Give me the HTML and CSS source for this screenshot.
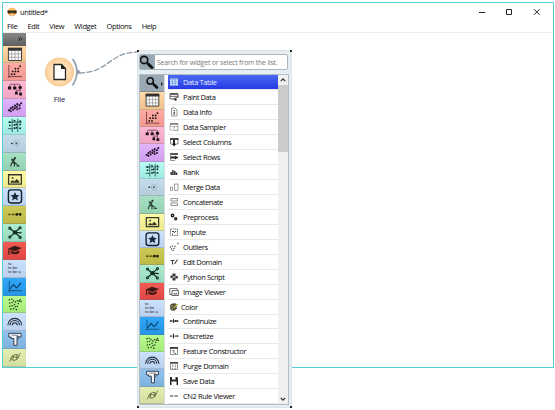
FILE: index.html
```html
<!DOCTYPE html>
<html lang="en">
<head>
<meta charset="utf-8">
<title>untitled*</title>
<link rel="stylesheet" href="styles.css">
</head>
<body>
<svg class="defs" xmlns="http://www.w3.org/2000/svg">
  <symbol id="c-search" viewBox="0 0 24 18"><circle cx="10" cy="6.500" r="3.500" fill="none" stroke="#111" stroke-width="1.600"/><path d="M12.500 9l1.500 1.300" stroke="#111"/><path d="M14 10.500l3.500 3.300" stroke="#111" stroke-width="2.900" stroke-linecap="round"/></symbol>
  <symbol id="c-table" viewBox="0 0 24 18"><path d="M5.500 2.500h14v13h-14z" fill="#fff" stroke="#333"/><path d="M5 2h15v3H5z" fill="#333"/><path d="M9 5v10M12.500 5v10M16 5v10M6 8.500h13M6 12h13" stroke="#777" stroke-width=".6"/></symbol>
  <symbol id="c-scatter" viewBox="0 0 24 18"><path d="M6 2v14M5 14.500h15" stroke="#753f3d" stroke-width="1"/><path d="M9 12h.01M12 12h.01M10 9h.01M13 9h.01M16 9h.01M13 6h.01M16 6h.01M18 3.500h.01" stroke="#1c1111" stroke-width="2" stroke-linecap="round"/></symbol>
  <symbol id="c-tree" viewBox="0 0 24 18"><path d="M7 7V4.500q0-1 1-1h9q1 0 1 1V7M12 3.500V7M14 13v-3h4v4M18 7v3" fill="none" stroke="#5e3a4a" stroke-width=".8"/><path d="M5 6h3.500v3H5zM10.500 6H14v3h-3.500zM12.500 11.500h3v3h-3zM17 12.500h3v3h-3z" fill="#24121c"/><circle cx="18" cy="7" r="1.900" fill="#24121c"/></symbol>
  <symbol id="c-dense" viewBox="0 0 24 18"><path d="M6 12h.01M8 10h.01M8 13h.01M10 8.500h.01M10.500 11.500h.01M12.500 7h.01M12.500 10h.01M14.500 8.500h.01M15 5.500h.01M15 11h.01M17.500 7h.01M17.500 10h.01M19 4.500h.01" stroke="#1f1027" stroke-width="2.200" stroke-linecap="round"/><path d="M6 12l13-7" stroke="#4b2c60" stroke-width=".7"/></symbol>
  <symbol id="c-grid" viewBox="0 0 24 18"><path d="M9.500 2v14M5 5.500h15M5 12.500h5M15.500 2v14" stroke="#265b58" stroke-width="1"/><path d="M7 9h.01M12 8.500h.01M14 8h.01M18 8h.01M12 12h.01M14 11.500h.01M18 12h.01M7 5.500h.01M12 4h.01M18 4.500h.01" stroke="#132f2d" stroke-width="2" stroke-linecap="round"/></symbol>
  <symbol id="c-spect" viewBox="0 0 24 18"><circle cx="9" cy="9" r="1" fill="#333"/><circle cx="14" cy="9" r="2.900" fill="none" stroke="#8597a5" stroke-dasharray="1 1"/><circle cx="14" cy="9" r="1" fill="#444"/><path d="M6.500 9h1M9 6.500v1M9 10.500v1" stroke="#f7fbff"/></symbol>
  <symbol id="c-dig" viewBox="0 0 24 18"><circle cx="12.500" cy="5.300" r="1.100" fill="#222"/><path d="M8.500 6.500l3.500.5-1.500 3 1.500 1.500v3M10 9.500l-1.500 2.500-.5 2.500M9 7.500l6 5" fill="none" stroke="#263a30" stroke-width="1.200"/><path d="M13.500 14.300h4.500l-2-2z" fill="#263a30"/></symbol>
  <symbol id="c-image" viewBox="0 0 24 18"><path d="M5.700 4h13.600v10H5.700z" fill="none" stroke="#38382c" stroke-width="1.400"/><path d="M8 12.500V11l2-1 2 1 2.500-2.500 2.500 2.500v1.500z" fill="#38382c"/><circle cx="10" cy="7.500" r="1.100" fill="#55553c"/></symbol>
  <symbol id="c-star" viewBox="0 0 24 18"><rect x="5.500" y="2" width="14" height="14" rx="2.800" fill="none" stroke="#101b29" stroke-width="1.500"/><path d="M12.500 4.300l1.400 3.100 3.500.3-2.600 2.300.8 3.400-3.100-1.900-3.100 1.900.8-3.400-2.600-2.300 3.500-.3z" fill="#1c2635"/></symbol>
  <symbol id="c-chain" viewBox="0 0 24 18"><path d="M6 9h13" stroke="#606015" stroke-width=".8"/><path d="M6.500 9h.01M10.500 9h.01" stroke="#555516" stroke-width="2.200" stroke-linecap="round"/><path d="M14.500 9h.01M18 9h.01" stroke="#22220c" stroke-width="3" stroke-linecap="round"/></symbol>
  <symbol id="c-net" viewBox="0 0 24 18"><path d="M7 4.500l11 9.500M18 4L7 14M12.500 9l7 .5" stroke="#132e22" stroke-width="1.400"/><circle cx="12.500" cy="9" r="2.300" fill="#132e22"/><g fill="#a4dfc3" stroke="#132e22" stroke-width="1.200"><circle cx="7" cy="4.500" r="1.100"/><circle cx="18" cy="4" r="1.100"/><circle cx="7" cy="14" r="1.100"/><circle cx="18" cy="14.300" r="1.100"/></g></symbol>
  <symbol id="c-cap" viewBox="0 0 24 18"><path d="M4.500 7.500L12 4l8 2.500-7.500 3.300z" fill="#3c1916"/><path d="M8 9l4.500 2 4.500-2.300v3q-4 2.800-9 .3z" fill="#3c1916"/><path d="M6 8v5.500" stroke="#3c1916" stroke-width="1.300"/></symbol>
  <symbol id="c-line" viewBox="0 0 24 18"><path d="M6.500 3v12M5 13.500h15" stroke="#134d76" stroke-width=".9"/><path d="M7 12l4-5 3 3.500 2-1.500 3-4" fill="none" stroke="#0c3c62" stroke-width="1.200"/></symbol>
  <symbol id="c-dots" viewBox="0 0 24 18"><path d="M6.500 4h.01M9 3.500h.01M11 5h.01M13 6.500h.01M15 5h.01M18 4h.01M19 6h.01M7 7.500h.01M9.500 7h.01M12 9h.01M16 8h.01M7 11h.01M9.500 10.500h.01M13 11.500h.01M15 11h.01M8 14h.01M11 13.500h.01M14 14.500h.01M17 5.500h.01" stroke="#26401a" stroke-width="1.700" stroke-linecap="round"/></symbol>
  <symbol id="c-rain" viewBox="0 0 24 18"><g fill="none" stroke="#202a38" stroke-width="1.200"><path d="M5 13a7.300 7.300 0 0 1 14.600 0M7.300 13a5 5 0 0 1 10 0M9.700 13a2.600 2.600 0 0 1 5.200 0"/></g></symbol>
  <symbol id="c-t" viewBox="0 0 24 18"><path d="M6 2.500h13v4h-2.500V5.700H14.700V15.300h-3.400V8H8.500V6.500H6z" fill="#f4f6fa" stroke="#2b3544" stroke-width="1" stroke-linejoin="round"/><path d="M16.300 6.500v2.300h-1.500M9 4.500h7" fill="none" stroke="#566275" stroke-width=".8"/></symbol>
  <symbol id="c-gene" viewBox="0 0 24 18"><path d="M6.500 13.500Q8 12 8.500 9.500T12.500 8.500 16.500 8 18.500 4M8.500 9.500q.5 3.500 4 2.500t4-4q-.8-3-4-2t-4 3.500M10.500 7v5M14.500 6v5" fill="none" stroke="#5d673c" stroke-width=".9"/></symbol>

  <symbol id="w-table" viewBox="0 0 10 10"><path d="M1 1.500h8v7H1z" fill="#d9eeff"/><path d="M1 2h8M3.500 2v6.500M6.300 2v6.500M1 4.300h8M1 6.400h8" stroke="#638de4" stroke-width=".7"/></symbol>
  <symbol id="w-paint" viewBox="0 0 10 10"><path d="M1 2h8v4M1 2v5h4M1 4.300h8M4 7l5-2" fill="none" stroke="#555" stroke-width=".9"/><path d="M1 1.300h8v1.200H1zM5 7l2-1 1 2-2 1z" fill="#333"/></symbol>
  <symbol id="w-info" viewBox="0 0 10 10"><path d="M2.500 1h3.500L8 3v6H2.500z" fill="none" stroke="#777" stroke-width=".8"/><path d="M5.200 3v1M5.200 4.800v3" stroke="#222" stroke-width="1.100"/></symbol>
  <symbol id="w-sample" viewBox="0 0 10 10"><path d="M1 2v6h3M1 4.500h3M9 2v2" fill="none" stroke="#999" stroke-width=".7"/><path d="M1 1.300h8v1.200H1z" fill="#444"/><path d="M5 4.500h4v4H5z" fill="none" stroke="#777" stroke-dasharray="1 .6"/></symbol>
  <symbol id="w-cols" viewBox="0 0 10 10"><path d="M1.500 2h7.500v5H1.500z" fill="none" stroke="#666" stroke-width=".8"/><path d="M1 1.300h8.500v1.500H1zM4 3h2v4h1L5 9.500 3 7h1z" fill="#222"/></symbol>
  <symbol id="w-rows" viewBox="0 0 10 10"><path d="M1 1.300h8v1.500H1zM1 4.500h5V3.500l3.500 2L6 7.500v-1H1z" fill="#222"/><path d="M1.500 2v6.500H6" fill="none" stroke="#777" stroke-width=".8"/></symbol>
  <symbol id="w-rank" viewBox="0 0 10 10"><path d="M1.500 5H3v3H1.500zM3.200 3h1.500v5H3.200zM5 4h1.500v4H5zM6.800 5.500h1.500V8H6.800z" fill="#333"/></symbol>
  <symbol id="w-merge" viewBox="0 0 10 10"><path d="M1.500 5h2v3.500h-2zM5.500 2H9v6.500H5.500z" fill="none" stroke="#888" stroke-width=".8"/></symbol>
  <symbol id="w-concat" viewBox="0 0 10 10"><path d="M2 1.500h6.500V4H2zM2 6h6.500v2.500H2z" fill="none" stroke="#777" stroke-width=".8"/></symbol>
  <symbol id="w-gears" viewBox="0 0 10 10"><g fill="none" stroke="#222" stroke-width="1.400"><circle cx="3.500" cy="3.500" r="1.200"/><circle cx="6.700" cy="6.700" r="1"/></g></symbol>
  <symbol id="w-impute" viewBox="0 0 10 10"><path d="M1.500 2h7v6.500h-7z" fill="none" stroke="#777" stroke-dasharray="1.500 .7"/><path d="M3 4.500h2M5 6l2-2M3 7h1" stroke="#444"/></symbol>
  <symbol id="w-out" viewBox="0 0 10 10"><path d="M1.500 5h.01M3.500 4h.01M2.500 7h.01M5 6.500h.01M4 8.500h.01M6 4.500h.01M9 1.500h.01" stroke="#333" stroke-width="1.300" stroke-linecap="round"/></symbol>
  <symbol id="w-edit" viewBox="0 0 10 10"><path d="M1.500 3.500h4M3.500 3.500v4M5.500 7L8.500 2.500" fill="none" stroke="#444" stroke-width="1.100"/></symbol>
  <symbol id="w-python" viewBox="0 0 10 10"><path d="M3.500 1.500h3v3h-3V6H1.500V3.500h2zM8.800 4v2.500H6.500v2h-3v-3h3V4z" fill="#3b3b3b"/></symbol>
  <symbol id="w-view" viewBox="0 0 10 10"><path d="M.8 1.500h7.400v6H.8z" fill="none" stroke="#555" stroke-width=".8"/><path d="M3 3.500h6.500v5H3z" fill="#fff" stroke="#444" stroke-width=".8"/><path d="M4 7.500l1.500-2 1 1 1-1 1 2z" fill="#777"/></symbol>
  <symbol id="w-color" viewBox="0 0 10 10"><path d="M1 3q2-2.500 6-1.500L8 6.500Q5 10 1.500 8z" fill="#514d3f"/><path d="M4.500 6L8.500 2" stroke="#b5a83c" stroke-width="1.500"/><path d="M3 4h.01M3.500 6.800h.01" stroke="#d9cb6e" stroke-width="1.300" stroke-linecap="round"/></symbol>
  <symbol id="w-cont" viewBox="0 0 10 10"><path d="M.5 5.200h9" stroke="#777" stroke-width=".7"/><path d="M2 5h.01M4.500 5h.01M6.500 5h.01M8.300 5h.01" stroke="#333" stroke-width="1.900" stroke-linecap="round"/><path d="M4.500 3v4" stroke="#333"/></symbol>
  <symbol id="w-disc" viewBox="0 0 10 10"><path d="M.5 5.200h9" stroke="#777" stroke-width=".8"/><path d="M2 5h.01M7 5h.01M8.700 5h.01" stroke="#333" stroke-width="1.500" stroke-linecap="round"/><path d="M4.500 2.500v5" stroke="#333" stroke-width="1.100"/></symbol>
  <symbol id="w-feat" viewBox="0 0 10 10"><path d="M1.500 2h7v6.500h-7z" fill="none" stroke="#777" stroke-width=".8"/><path d="M1 1h8v1.700H1z" fill="#333"/><path d="M3.500 4.500h1.500v3M6 7.500h1" fill="none" stroke="#555" stroke-width=".9"/></symbol>
  <symbol id="w-purge" viewBox="0 0 10 10"><path d="M1.500 2h7v6.500h-7z" fill="none" stroke="#777" stroke-width=".8"/><path d="M1 1h8v1.500H1z" fill="#444"/><path d="M3.700 3.500v4.500M6.300 3.500v4.500" stroke="#666" stroke-width="1" stroke-dasharray="1 .7"/></symbol>
  <symbol id="w-save" viewBox="0 0 10 10"><path d="M1 1h7l1 1v7H1z" fill="#2b2b2b"/><path d="M3 1h3.500v2.600H3zM2.500 5.500h5V9h-5z" fill="#fff"/></symbol>
  <symbol id="w-rule" viewBox="0 0 10 10"><path d="M1 5h3.300M5.500 5h3.300" stroke="#333" stroke-width="1.200"/></symbol>
</svg>

<div class="window">
  <header class="titlebar">
    <svg class="logo" viewBox="0 0 10 10"><circle cx="5" cy="5" r="4.300" fill="#ee9431"/><path d="M1 2.800Q5-1 9 2.800L5 4z" fill="#ffc36a"/><path d="M.3 3.500h9.400v2.800H6L5 5.200 4 6.300H.8z" fill="#342a20"/><path d="M3 7.500q2 1.200 4 0" stroke="#fff" fill="none"/></svg>
    <span class="title">untitled*</span>
    <svg class="controls" viewBox="0 0 64 12"><path d="M1 6.500h6" stroke="#222"/><path d="M28.500 3.500h5v5h-5z" fill="none" stroke="#222"/><path d="M56 3.200l5.500 5.500M61.500 3.200L56 8.700" stroke="#222"/></svg>
  </header>
  <nav class="menubar"><span>File</span><span>Edit</span><span>View</span><span>Widget</span><span>Options</span><span>Help</span></nav>
  <main class="workspace">
    <aside class="dock">
      <div class="dock-head"><svg viewBox="0 0 6 6"><path d="M.5 1l1.800 2L.5 5M3 1l1.800 2L3 5" fill="none" stroke="#111" stroke-width=".9"/></svg></div>
      <div class="tiles">
        <svg class="tile peach"><use href="#c-table"/></svg>
        <svg class="tile red"><use href="#c-scatter"/></svg>
        <svg class="tile pink"><use href="#c-tree"/></svg>
        <svg class="tile violet"><use href="#c-dense"/></svg>
        <svg class="tile aqua"><use href="#c-grid"/></svg>
        <svg class="tile steel"><use href="#c-spect"/></svg>
        <svg class="tile green"><use href="#c-dig"/></svg>
        <svg class="tile yellow"><use href="#c-image"/></svg>
        <svg class="tile ice"><use href="#c-star"/></svg>
        <svg class="tile olive"><use href="#c-chain"/></svg>
        <svg class="tile mint"><use href="#c-net"/></svg>
        <svg class="tile crimson"><use href="#c-cap"/></svg>
        <div class="tile ice words"><span>to</span><span>to be</span><span>to be a</span></div>
        <svg class="tile blue"><use href="#c-line"/></svg>
        <svg class="tile lime"><use href="#c-dots"/></svg>
        <svg class="tile ice"><use href="#c-rain"/></svg>
        <svg class="tile sky"><use href="#c-t"/></svg>
        <svg class="tile khaki"><use href="#c-gene"/></svg>
      </div>
    </aside>
    <section class="canvas">
      <svg class="link" viewBox="0 0 100 50">
        <path d="M35 35C65 35 65 14 94 14" transform="translate(5 0)" fill="none" stroke="#8b99a5" stroke-width="1.300" stroke-dasharray="6 1.500"/>
      </svg>
      <div class="node">
        <svg class="node-icon" viewBox="0 0 36 32"><defs><radialGradient id="disc"><stop offset="0" stop-color="#ffe9cc"/><stop offset=".7" stop-color="#ffdcaf"/><stop offset="1" stop-color="#f6c993"/></radialGradient></defs><circle cx="15.500" cy="16" r="14.600" fill="url(#disc)"/><path d="M10 8.500h7.500l4 4v11H10z" fill="#fff" stroke="#2b2926" stroke-width="1.300"/><path d="M17 8l5 5h-5z" fill="#222"/><path d="M28.500 3Q37.500 15 28.500 29.500" fill="none" stroke="#90a0ab" stroke-width="1.700"/><circle cx="34" cy="16" r="2" fill="#90a0ab"/></svg>
        <span>File</span>
      </div>
    </section>
  </main>
</div>

<div class="popup">
  <i class="corner tl"></i><i class="corner tr"></i><i class="corner bl"></i><i class="corner br"></i>
  <div class="search"><svg viewBox="6 2 14.500 13"><use href="#c-search" width="24" height="18"/></svg><span>Search for widget or select from the list.</span></div>
  <div class="panel">
    <div class="tiles">
      <svg class="tile slate"><use href="#c-search"/><path d="M21 7v4l2-2z" fill="#222"/></svg>
      <svg class="tile peach"><use href="#c-table"/></svg>
      <svg class="tile red"><use href="#c-scatter"/></svg>
      <svg class="tile pink"><use href="#c-tree"/></svg>
      <svg class="tile violet"><use href="#c-dense"/></svg>
      <svg class="tile aqua"><use href="#c-grid"/></svg>
      <svg class="tile steel"><use href="#c-spect"/></svg>
      <svg class="tile green"><use href="#c-dig"/></svg>
      <svg class="tile yellow"><use href="#c-image"/></svg>
      <svg class="tile ice"><use href="#c-star"/></svg>
      <svg class="tile olive"><use href="#c-chain"/></svg>
      <svg class="tile mint"><use href="#c-net"/></svg>
      <svg class="tile crimson"><use href="#c-cap"/></svg>
      <div class="tile ice words"><span>to</span><span>to be</span><span>to be a</span></div>
      <svg class="tile blue"><use href="#c-line"/></svg>
      <svg class="tile lime"><use href="#c-dots"/></svg>
      <svg class="tile ice"><use href="#c-rain"/></svg>
      <svg class="tile sky"><use href="#c-t"/></svg>
      <svg class="tile khaki"><use href="#c-gene"/></svg>
    </div>
    <ul class="list">
      <li class="selected"><svg><use href="#w-table"/></svg>Data Table</li>
      <li><svg><use href="#w-paint"/></svg>Paint Data</li>
      <li><svg><use href="#w-info"/></svg>Data Info</li>
      <li><svg><use href="#w-sample"/></svg>Data Sampler</li>
      <li><svg><use href="#w-cols"/></svg>Select Columns</li>
      <li><svg><use href="#w-rows"/></svg>Select Rows</li>
      <li><svg><use href="#w-rank"/></svg>Rank</li>
      <li><svg><use href="#w-merge"/></svg>Merge Data</li>
      <li><svg><use href="#w-concat"/></svg>Concatenate</li>
      <li><svg><use href="#w-gears"/></svg>Preprocess</li>
      <li><svg><use href="#w-impute"/></svg>Impute</li>
      <li><svg><use href="#w-out"/></svg>Outliers</li>
      <li><svg><use href="#w-edit"/></svg>Edit Domain</li>
      <li><svg><use href="#w-python"/></svg>Python Script</li>
      <li><svg><use href="#w-view"/></svg>Image Viewer</li>
      <li class="tight"><svg><use href="#w-color"/></svg>Color</li>
      <li><svg><use href="#w-cont"/></svg>Continuize</li>
      <li><svg><use href="#w-disc"/></svg>Discretize</li>
      <li><svg><use href="#w-feat"/></svg>Feature Constructor</li>
      <li><svg><use href="#w-purge"/></svg>Purge Domain</li>
      <li><svg><use href="#w-save"/></svg>Save Data</li>
      <li><svg><use href="#w-rule"/></svg>CN2 Rule Viewer</li>
    </ul>
    <div class="scroll">
      <svg viewBox="0 0 9 9"><path d="M2.500 5.500l2-2 2 2" fill="none" stroke="#333" stroke-width="1.200"/></svg>
      <div class="thumb"></div>
      <svg viewBox="0 0 9 9"><path d="M2.500 3.500l2 2 2-2" fill="none" stroke="#333" stroke-width="1.200"/></svg>
    </div>
  </div>
</div>
</body>
</html>
```
FILE: styles.css
```css
* { box-sizing: border-box; }
body {
  margin: 0;
  width: 555px;
  height: 410px;
  padding: 2px 2px 0 2px;
  overflow: hidden;
  background: #fff;
  font-family: "Open Sans", "Noto Sans", sans-serif;
  font-size: 7.5px;
  letter-spacing: -0.38px;
  color: #0c0c0c;
}
svg { display: block; }
.defs { position: absolute; width: 0; height: 0; }

.window {
  display: flex;
  flex-direction: column;
  width: 552px;
  height: 366px;
  border: 1px solid #58cfd3;
}
.titlebar { display: flex; align-items: center; height: 17px; padding: 0 11px 0 4px; }
.logo { width: 10px; height: 10px; }
.title { margin-left: 3px; }
.controls { width: 64px; height: 12px; margin-left: auto; }
.menubar {
  display: flex;
  height: 13px;
  padding-left: 4px;
  gap: 10.1px;
  line-height: 12px;
  border-bottom: 1px solid #eee;
}
.workspace { display: flex; flex: 1; min-height: 0; }
.dock { display: flex; flex-direction: column; width: 23px; }
.dock-head {
  display: flex;
  justify-content: flex-end;
  align-items: center;
  height: 12.5px;
  padding-right: 3px;
  background: linear-gradient(#888, #5e5e5e);
}
.dock-head svg { width: 5px; height: 6px; }
.tiles { display: flex; flex-direction: column; flex: 1; min-height: 0; }
.tile {
  flex: 1 1 0;
  min-height: 0;
  width: 100%;
  border-bottom: 1px solid rgba(60, 70, 80, 0.28);
}
.words {
  display: flex;
  flex-direction: column;
  justify-content: center;
  padding-left: 5px;
  font: 4.2px/4.2px "Liberation Sans", sans-serif;
  letter-spacing: 0;
  color: #1d2a36;
  white-space: nowrap;
}
.slate { background: #98a9b4; }
.peach { background: linear-gradient(#ffd9a8, #efc28b); }
.red { background: linear-gradient(#ffaaa3, #f39991); }
.pink { background: linear-gradient(#ffb9d5, #f1a5c4); }
.violet { background: linear-gradient(#e1b4fc, #d09eed); }
.aqua { background: linear-gradient(#b9fcf3, #9feae1); }
.steel { background: linear-gradient(#c5dcea, #b3cddd); }
.green { background: linear-gradient(#a5e1c2, #94d1b1); }
.yellow { background: linear-gradient(#fffaa3, #efe98c); }
.ice { background: linear-gradient(#cbe1fc, #bbd2ef); }
.olive { background: linear-gradient(#cdca58, #bdb945); }
.mint { background: linear-gradient(#acecd1, #99d9be); }
.crimson { background: linear-gradient(#f15b54, #df4842); }
.blue { background: linear-gradient(#31a6fa, #2595e5); }
.lime { background: linear-gradient(#bafc8f, #a5ea79); }
.sky { background: linear-gradient(#92c3ed, #7fb1dd); }
.khaki { background: linear-gradient(#e4eeb1, #d4dea0); }

.canvas { position: relative; flex: 1; }
.link { position: absolute; left: 13px; top: 5px; width: 100px; height: 50px; }
.node { position: absolute; left: 18px; top: 23px; width: 36px; }
.node-icon { width: 36px; height: 32px; }
.node span { display: block; width: 31px; margin-top: 6px; text-align: center; letter-spacing: -0.1px; color: #15153a; }

.popup {
  position: absolute;
  left: 137px;
  top: 50px;
  width: 155px;
  height: 358px;
  padding: 3px 3px 3px;
  background: #e7eef2;
  border: 1px solid #dbe4e9;
}
.corner { position: absolute; width: 2px; height: 2px; background: #222; }
.tl { left: -1px; top: -1px; }
.tr { right: -1px; top: -1px; }
.bl { left: -1px; bottom: -1px; }
.br { right: -1px; bottom: -1px; }
.search {
  display: flex;
  align-items: center;
  width: 149px;
  height: 16px;
  margin-left: -2px;
  background: #fff;
  border: 1px solid #aab7c0;
  border-radius: 2px;
  color: #7b7b7b;
  white-space: nowrap;
}
.search svg { width: 15px; height: 14px; background: #98a9b4; }
.search span { margin-left: 2px; font-size: 7px; letter-spacing: -0.22px; }
.panel {
  display: flex;
  width: 150px;
  height: 331px;
  margin: 4px 0 0 -2px;
  border: 1px solid #b1bec6;
  background: #fff;
}
.panel .tiles { flex: 0 0 24px; }
.list {
  flex: 1;
  margin: 0;
  padding: 0 0 0 3px;
  list-style: none;
  border-left: 1px solid #d5dde2;
}
.list li {
  display: flex;
  align-items: center;
  height: 14.98px;
  padding-left: 1px;
  border-bottom: 1px solid #e9e9e9;
  white-space: nowrap;
}
.list svg { width: 10px; height: 10px; margin-right: 4px; }
.list .tight svg { margin-right: 2px; }
.list .selected { color: #e4edff; background: linear-gradient(#4969f4, #2639e4); }
.scroll { display: flex; flex-direction: column; width: 10px; background: #f0f0f0; }
.scroll svg { width: 10px; height: 10px; }
.thumb { height: 67px; margin-bottom: auto; background: #cbcbcb; }
```
